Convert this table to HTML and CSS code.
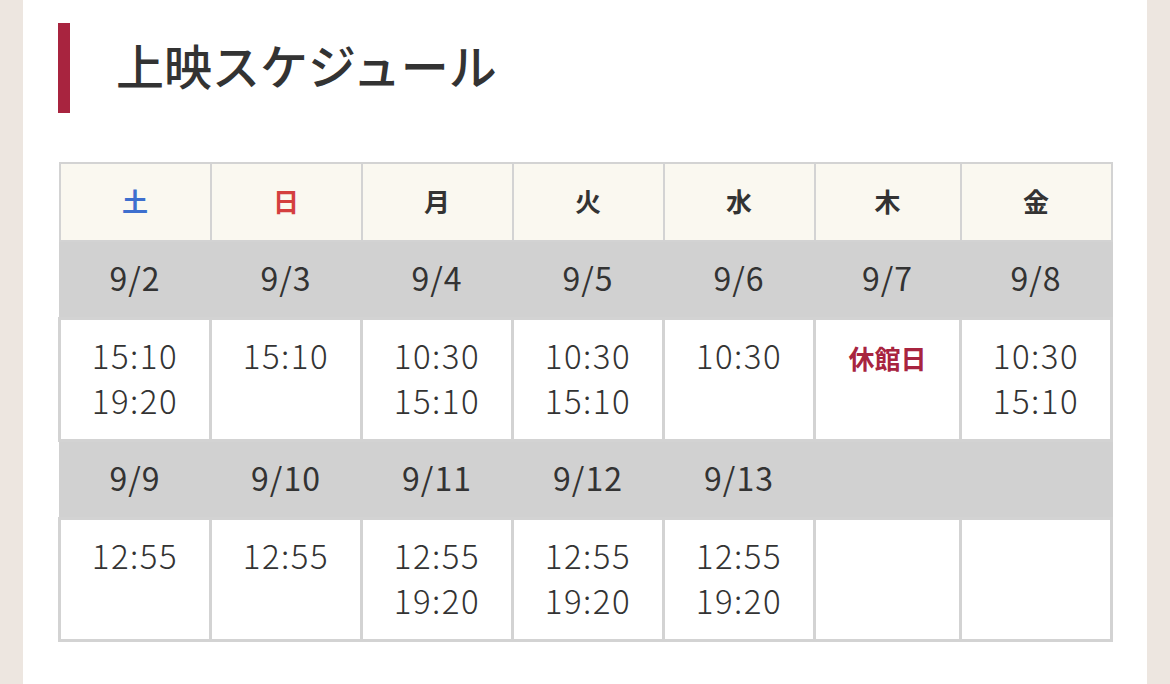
FILE: index.html
```html
<!DOCTYPE html>
<html lang="ja">
<head>
<meta charset="utf-8">
<title>上映スケジュール</title>
<link rel="stylesheet" href="styles.css">
</head>
<body>
<div class="panel">
  <h2 class="title">上映スケジュール</h2>
  <table class="schedule">
    <colgroup>
      <col class="c1"><col class="c2"><col class="c3"><col class="c4"><col class="c5"><col class="c6"><col class="c7">
    </colgroup>
    <thead>
      <tr class="days">
        <th class="sat">土</th><th class="sun">日</th><th>月</th><th>火</th><th>水</th><th>木</th><th>金</th>
      </tr>
    </thead>
    <tbody>
      <tr class="dates">
        <td>9/2</td><td>9/3</td><td>9/4</td><td>9/5</td><td>9/6</td><td>9/7</td><td>9/8</td>
      </tr>
      <tr class="times">
        <td>15:10<br>19:20</td>
        <td>15:10</td>
        <td>10:30<br>15:10</td>
        <td>10:30<br>15:10</td>
        <td>10:30</td>
        <td><span class="closed">休館日</span></td>
        <td>10:30<br>15:10</td>
      </tr>
      <tr class="dates">
        <td>9/9</td><td>9/10</td><td>9/11</td><td>9/12</td><td>9/13</td><td></td><td></td>
      </tr>
      <tr class="times">
        <td>12:55</td>
        <td>12:55</td>
        <td>12:55<br>19:20</td>
        <td>12:55<br>19:20</td>
        <td>12:55<br>19:20</td>
        <td></td>
        <td></td>
      </tr>
    </tbody>
  </table>
</div>
</body>
</html>
```

FILE: styles.css
```css
html, body {
  margin: 0;
  padding: 0;
}
body {
  background: #ede6e0;
  font-family: "Noto Sans CJK JP", "Noto Sans", sans-serif;
  color: #333333;
  height: 684px;
  overflow: hidden;
}
.panel {
  margin: 0 23px;
  background: #ffffff;
  height: 684px;
  padding: 23px 35px 0 35px;
  box-sizing: border-box;
}
.title {
  margin: 0;
  height: 90px;
  border-left: 12px solid #a8243f;
  padding-left: 46px;
  padding-bottom: 8px;
  box-sizing: border-box;
  display: flex;
  align-items: center;
  font-size: 48px;
  font-weight: 500;
  color: #333333;
}
.schedule {
  margin-top: 49px;
  width: 1054px;
  table-layout: fixed;
  border-collapse: collapse;
  text-align: center;
}
.c1, .c2, .c3, .c4, .c5, .c7 { width: 151px; }
.c6 { width: 146px; }
.days th {
  height: 72px;
  background: #faf8f0;
  border: 2px solid #d3d3d3;
  font-size: 26px;
  font-weight: 700;
  color: #333333;
  padding: 0 0 4px 0;
}
.days .sat { color: #3d6fce; }
.days .sun { color: #d43f3f; }
.dates td {
  height: 70px;
  background: #d1d1d1;
  border: 2px solid #d1d1d1;
  font-size: 32px;
  font-weight: 400;
  letter-spacing: 1px;
  padding: 0 0 5px 0;
}
.times td {
  height: 122px;
  box-sizing: border-box;
  background: #ffffff;
  border: 3px solid #d3d3d3;
  vertical-align: top;
  padding: 13px 0 0 0;
  font-size: 33px;
  font-weight: 300;
  letter-spacing: 1.5px;
  line-height: 45px;
}
.closed {
  color: #a8243f;
  font-size: 26px;
  font-weight: 700;
  letter-spacing: 0;
}
```
